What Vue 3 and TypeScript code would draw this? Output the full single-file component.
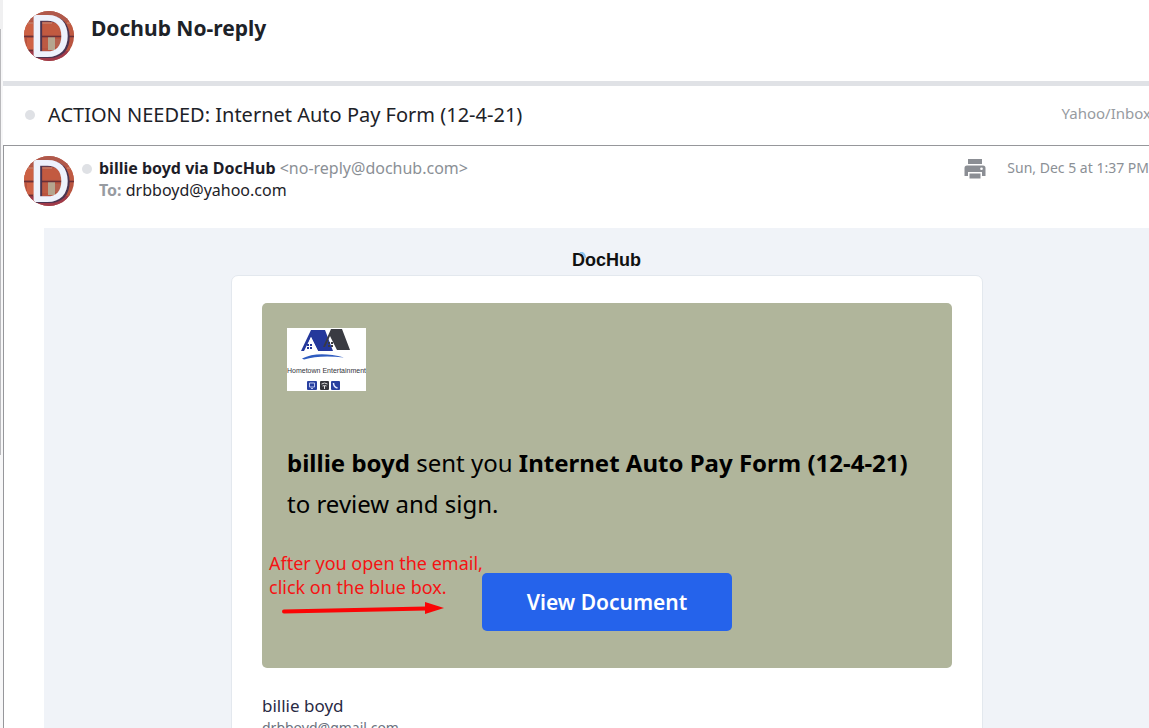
<script setup lang="ts">
import { ref } from 'vue'

interface Message {
  sender: string
  address: string
  recipient: string
  date: string
  folder: string
}

const subject = 'ACTION NEEDED: Internet Auto Pay Form (12-4-21)'
const message = ref<Message>({
  sender: 'billie boyd via DocHub',
  address: '<no-reply@dochub.com>',
  recipient: 'drbboyd@yahoo.com',
  date: 'Sun, Dec 5 at 1:37 PM',
  folder: 'Yahoo/Inbox',
})
const printMessage = (): void => window.print()
</script>

<template>
  <div class="page">
    <div class="rail"><span class="rail-top"></span><span class="rail-line"></span></div>
    <svg class="defs" aria-hidden="true">
      <defs>
        <clipPath id="disc"><circle cx="25" cy="25" r="25" /></clipPath>
        <symbol id="brick" viewBox="0 0 50 50">
          <g clip-path="url(#disc)">
            <rect width="50" height="50" fill="#b9543f" />
            <rect width="50" height="10" fill="#b0594b" />
            <rect y="12" width="50" height="12" fill="#bf5a42" />
            <rect y="13" width="9" height="11" fill="#cc6144" />
            <rect y="27" x="3" width="7" height="11" fill="#cf6246" />
            <rect y="14" x="18" width="16" height="9" fill="#c25a40" />
            <rect y="27" x="17" width="7" height="10" fill="#bd5a43" />
            <rect y="26" x="24" width="7" height="13" fill="#b5a58f" />
            <rect y="28" x="31" width="8" height="8" fill="#b5604e" />
            <rect y="40" width="50" height="10" fill="#9f3a4a" />
            <path d="M0 12h9M43 12h7M18 12h10" stroke="#c98f7c" stroke-width="1.200" fill="none" />
            <path d="M0 25.500h50M0 39.500h9M45 39.500h5" stroke="#6b3038" stroke-width="1.400" fill="none" />
            <text x="7" y="47" class="avatar-shade" font-family="Inter, sans-serif" font-size="58" font-weight="500">D</text>
            <text x="5" y="46" class="avatar-letter" font-family="Inter, sans-serif" font-size="58" font-weight="500">D</text>
          </g>
        </symbol>
      </defs>
    </svg>
    <main class="mail">
      <header class="contact">
        <svg class="avatar" role="img" aria-label="Dochub No-reply"><use href="#brick" /></svg>
        <h1>Dochub No-reply</h1>
      </header>
      <div class="subject">
        <span class="dot"></span>
        <h2>{{ subject }}</h2>
        <a href="#inbox" class="folder">{{ message.folder }}</a>
      </div>
      <article class="message">
        <div class="meta">
          <svg class="avatar" role="img" aria-label="billie boyd"><use href="#brick" /></svg>
          <span class="dot"></span>
          <div class="people">
            <p><strong>{{ message.sender }}</strong> <span class="address">{{ message.address }}</span></p>
            <p><b class="to">To:</b> {{ message.recipient }}</p>
          </div>
          <button class="print" type="button" aria-label="Print" @click="printMessage">
            <svg viewBox="0 0 22 20">
              <path fill="#8b8e94" d="M4 0h14v5H4zM3 6.500h16a2.500 2.500 0 0 1 2.500 2.500v8H18v-4H4v4H.5V9A2.500 2.500 0 0 1 3 6.500zM5.500 14.500h11v5h-11z" />
              <circle cx="17.500" cy="9.800" r="1.300" fill="#fff" />
            </svg>
          </button>
          <time class="date">{{ message.date }}</time>
        </div>
        <section class="body">
          <div class="brand">
            DocHub
            <svg viewBox="0 0 8 8"><path d="M2 0Q7 1 7 6" fill="none" stroke="#8cc4ee" stroke-width="2" /></svg>
          </div>
          <div class="card">
            <div class="panel">
              <svg class="logo" viewBox="0 0 79 63" role="img" aria-label="Hometown Entertainment">
                <rect width="79" height="63" fill="#fff" />
                <path d="M24 2h14l8 21H31L24 9l-7 14h-3z" fill="#24389b" />
                <path d="M44 1h11l8 21H50L43 8l-5 11h-2z" fill="#3a3b42" />
                <path d="M24 9l7 14H18z" fill="#fff" />
                <path d="M20 16h2v2h-2zM23 16h2v2h-2zM20 19h2v2h-2zM23 19h2v2h-2z" fill="#24389b" />
                <path d="M41 14h2v2h-2zM44 14h2v2h-2zM41 17h2v2h-2zM44 17h2v2h-2z" fill="#3a3b42" />
                <path d="M15 30.500q16-8 42-1q-24-3-40 2z" fill="#2f5cc0" />
                <text x="39.500" y="45" text-anchor="middle" class="logo-name">Hometown Entertainment</text>
                <rect x="20" y="53" width="10" height="9" rx="1" fill="#2940a0" />
                <rect x="33" y="53" width="9" height="9" rx="1" fill="#33343a" />
                <rect x="44" y="53" width="9" height="9" rx="1" fill="#2940a0" />
                <path d="M22.500 55h5v4h-5zM24 60.500h2" fill="none" stroke="#b9c4ee" />
                <path d="M34.500 56q3-2 6 0M35.500 58q2-1 4 0M37.500 58v3" fill="none" stroke="#ddd" />
                <path d="M46.500 55q0 4 4 5" fill="none" stroke="#dfe5ff" stroke-width="1.500" />
              </svg>
              <p class="lead"><b>billie boyd</b> sent you <b>Internet Auto Pay Form (12-4-21)</b> to review and sign.</p>
              <a href="#document" class="cta">View Document</a>
              <div class="note">
                <p>After you open the email,<br />click on the blue box.</p>
                <svg viewBox="0 0 164 14">
                  <path d="M2 10.500L144 7.500" stroke="#fb0505" stroke-width="4" stroke-linecap="round" />
                  <path d="M143 1l19 6-19 6z" fill="#fb0505" />
                </svg>
              </div>
            </div>
            <p class="from-name">billie boyd</p>
            <p class="from-mail">drbboyd@gmail.com</p>
          </div>
        </section>
      </article>
    </main>
  </div>
</template>

<style>
body { margin: 0; background: #fff; }
</style>

<style scoped>
* { box-sizing: border-box; }
p, h1, h2 { margin: 0; }
.page {
  display: flex;
  height: 100vh;
  overflow: hidden;
  color: #1d2228;
  font-family: "Noto Sans", "Open Sans", sans-serif;
}
.defs { position: absolute; width: 0; height: 0; }
.rail { display: flex; flex-direction: column; flex: 0 0 3px; background: #f7f7f8; }
.rail-top { height: 29px; background: #f0f0f1; }
.rail-line { height: 426px; border-left: 1px solid #b9b9bc; }
.mail { flex: 1; min-width: 0; }
.avatar { flex: none; width: 50px; height: 50px; }
.avatar-letter { fill: #eef2fc; }
.avatar-shade { fill: #4a3450; }
.contact {
  display: flex;
  height: 86px;
  padding: 11px 0 0 21px;
  gap: 17px;
  border-bottom: 5px solid #e0e2e6;
}
h1 { font-size: 21px; line-height: 34px; font-weight: 700; }
.subject { display: flex; align-items: center; height: 59px; padding: 0 0 2px 22px; }
.dot { flex: none; width: 10px; height: 10px; border-radius: 50%; background: #dfe1e5; }
h2 { flex: 1; margin-left: 13px; font-size: 20px; line-height: 28px; font-weight: 400; white-space: nowrap; }
.folder { margin-right: -2px; padding-bottom: 4px; color: #979ba1; font-size: 15px; line-height: 24px; text-decoration: none; }
.message { border: solid #96979b; border-width: 1px 0 0 1px; min-height: 100vh; }
.meta { display: flex; height: 82px; padding: 10px 0 0 20px; }
.meta .dot { margin: 8px 7px 0 8px; }
.people { flex: 1; font-size: 16px; line-height: 22px; white-space: nowrap; padding-top: 1px; }
.people strong { color: #1d1d28; }
.address, .date { color: #8b9096; }
.to { color: #979ba1; }
.print { width: 22px; height: 20px; margin: 3px 21px 0 0; padding: 0; border: 0; background: none; }
.print svg { display: block; width: 100%; }
.date { font-size: 14px; line-height: 24px; white-space: nowrap; }
.body { margin: 0 -21px 0 40px; background: #f0f3f8; padding-top: 19px; min-height: 600px; }
.brand {
  position: relative;
  width: 70px;
  margin: 0 auto;
  padding-bottom: 2px;
  color: #111;
  font: 700 18px/26px "Liberation Sans", Arial, sans-serif;
}
.brand svg { position: absolute; left: 6px; top: 5px; width: 8px; height: 8px; }
.card {
  max-width: 752px;
  margin: 0 auto;
  padding: 27px 30px;
  background: #fff;
  border: 1px solid #e3e8ee;
  border-radius: 7px;
}
.panel { position: relative; padding: 25px 25px 37px; background: #b0b59b; border-radius: 5px; }
.logo { display: block; width: 79px; height: 63px; }
.logo-name { font-family: "Liberation Sans", sans-serif; font-size: 7px; fill: #33343a; }
.lead { margin-top: 51px; color: #000; font-size: 24px; line-height: 41px; }
.cta {
  display: block;
  width: 250px;
  margin: 49px auto 0;
  border-radius: 5px;
  background: #2563eb;
  color: #fff;
  font-size: 21px;
  line-height: 58px;
  font-weight: 600;
  text-align: center;
  text-decoration: none;
}
.note { position: absolute; left: 7px; bottom: 53px; color: #f51313; font-size: 18px; line-height: 24px; white-space: nowrap; }
.note svg { display: block; width: 164px; height: 14px; margin: 2px 0 0 13px; }
.from-name { margin-top: 26px; font-size: 17px; line-height: 24px; color: #2a2a44; }
.from-mail { font-size: 14px; line-height: 20px; color: #6b7280; }
</style>
